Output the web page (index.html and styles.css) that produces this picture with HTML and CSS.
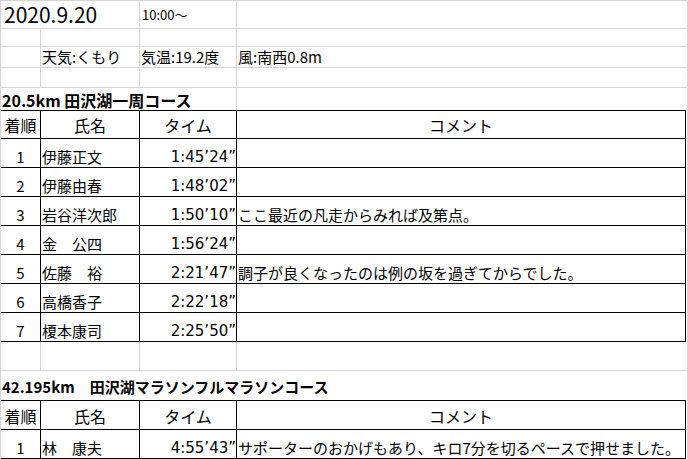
FILE: index.html
```html
<!DOCTYPE html>
<html lang="ja">
<head>
<meta charset="utf-8">
<title>田沢湖マラソン記録</title>
<link rel="stylesheet" href="styles.css">
</head>
<body>
<div class="sheet">
  <div class="row r1">
    <div class="c span-ab date">2020.9.20</div>
    <div class="c start">10:00〜</div>
    <div class="c span-de"></div>
  </div>
  <div class="row r2">
    <div class="c"></div><div class="c"></div><div class="c"></div><div class="c span-de"></div>
  </div>
  <div class="row r3">
    <div class="c"></div>
    <div class="c">天気:くもり</div>
    <div class="c">気温:19.2度</div>
    <div class="c span-de">風:南西0.8m</div>
  </div>
  <div class="row r4">
    <div class="c"></div><div class="c"></div><div class="c"></div><div class="c span-de"></div>
  </div>
  <div class="row r5">
    <div class="c span-abc title1">20.5km 田沢湖一周コース</div>
    <div class="c span-de"></div>
  </div>

  <div class="row hdr">
    <div class="t center">着順</div>
    <div class="t center">氏名</div>
    <div class="t center">タイム</div>
    <div class="t center">コメント</div>
    <div class="e"></div>
  </div>
  <div class="row data">
    <div class="t center">1</div><div class="t">伊藤正文</div><div class="t time">1:45’24”</div><div class="t"></div><div class="e"></div>
  </div>
  <div class="row data">
    <div class="t center">2</div><div class="t">伊藤由春</div><div class="t time">1:48’02”</div><div class="t"></div><div class="e"></div>
  </div>
  <div class="row data">
    <div class="t center">3</div><div class="t">岩谷洋次郎</div><div class="t time">1:50’10”</div><div class="t">ここ最近の凡走からみれば及第点。</div><div class="e"></div>
  </div>
  <div class="row data">
    <div class="t center">4</div><div class="t">金　公四</div><div class="t time">1:56’24”</div><div class="t"></div><div class="e"></div>
  </div>
  <div class="row data">
    <div class="t center">5</div><div class="t">佐藤　裕</div><div class="t time">2:21’47”</div><div class="t">調子が良くなったのは例の坂を過ぎてからでした。</div><div class="e"></div>
  </div>
  <div class="row data">
    <div class="t center">6</div><div class="t">高橋香子</div><div class="t time">2:22’18”</div><div class="t"></div><div class="e"></div>
  </div>
  <div class="row data">
    <div class="t center">7</div><div class="t">榎本康司</div><div class="t time">2:25’50”</div><div class="t"></div><div class="e"></div>
  </div>

  <div class="row blank">
    <div class="c"></div><div class="c"></div><div class="c"></div><div class="c span-de"></div>
  </div>
  <div class="row r-title2">
    <div class="c span-all title2">42.195km　田沢湖マラソンフルマラソンコース</div>
  </div>

  <div class="row hdr hdr2">
    <div class="t center">着順</div>
    <div class="t center">氏名</div>
    <div class="t center">タイム</div>
    <div class="t center">コメント</div>
    <div class="e"></div>
  </div>
  <div class="row data">
    <div class="t center">1</div><div class="t">林　康夫</div><div class="t time">4:55’43”</div><div class="t">サポーターのおかげもあり、キロ7分を切るペースで押せました。</div><div class="e"></div>
  </div>
</div>
</body>
</html>
```

FILE: styles.css
```css
* {
  box-sizing: border-box;
  margin: 0;
  padding: 0;
}

html, body {
  width: 688px;
  height: 459px;
  overflow: hidden;
  background: #fff;
}

body {
  font-family: "Noto Sans CJK JP", sans-serif;
  font-size: 15px;
  color: #000;
}

.sheet {
  width: 688px;
  border-top: 1px solid #d4d4d4;
  border-left: 1px solid #d4d4d4;
}

.row {
  display: grid;
  grid-template-columns: 40px 99px 97px 449px 2px;
}

.c {
  border-right: 1px solid #d4d4d4;
  border-bottom: 1px solid #d4d4d4;
  display: flex;
  align-items: flex-end;
  padding: 0 1px 1px;
  line-height: 18px;
  white-space: nowrap;
  min-width: 0;
}

.span-ab { grid-column: 1 / 3; }
.span-abc { grid-column: 1 / 4; }
.span-de { grid-column: 4 / 6; }
.span-all { grid-column: 1 / 6; }

.r1 { height: 28px; }
.r2 { height: 18px; }
.r3 { height: 21px; }
.r4 { height: 20px; }
.r5 { height: 22px; }
.r5 .c { border-bottom: none; }

.date {
  font-size: 21px;
  line-height: 26px;
  padding-left: 3px;
  padding-bottom: 1px;
}

.start {
  font-size: 13px;
  padding-left: 2px;
  padding-bottom: 4px;
}

.title1 {
  font-size: 16px;
  font-weight: bold;
  padding-bottom: 1px;
}

.title2 {
  font-size: 15px;
  font-weight: bold;
  padding-bottom: 4px;
}

/* table cells */
.t {
  border-right: 1px solid #000;
  border-bottom: 1px solid #000;
  display: flex;
  align-items: flex-end;
  padding: 0 1px 1px;
  line-height: 18px;
  white-space: nowrap;
  min-width: 0;
}

.e {
  border-right: 1px solid #d4d4d4;
}

.hdr { height: 29px; }
.hdr2 { height: 30px; }
.hdr .t {
  border-top: 1px solid #000;
  font-size: 16px;
  padding-bottom: 4px;
}

.data { height: 29px; }

.center { justify-content: center; }

.time {
  justify-content: flex-end;
  font-family: "DejaVu Sans", sans-serif;
  font-size: 15px;
  padding-right: 0;
}

.blank { height: 29px; }
.r-title2 { height: 29px; }
.r-title2 .c { border-bottom: none; }
```
